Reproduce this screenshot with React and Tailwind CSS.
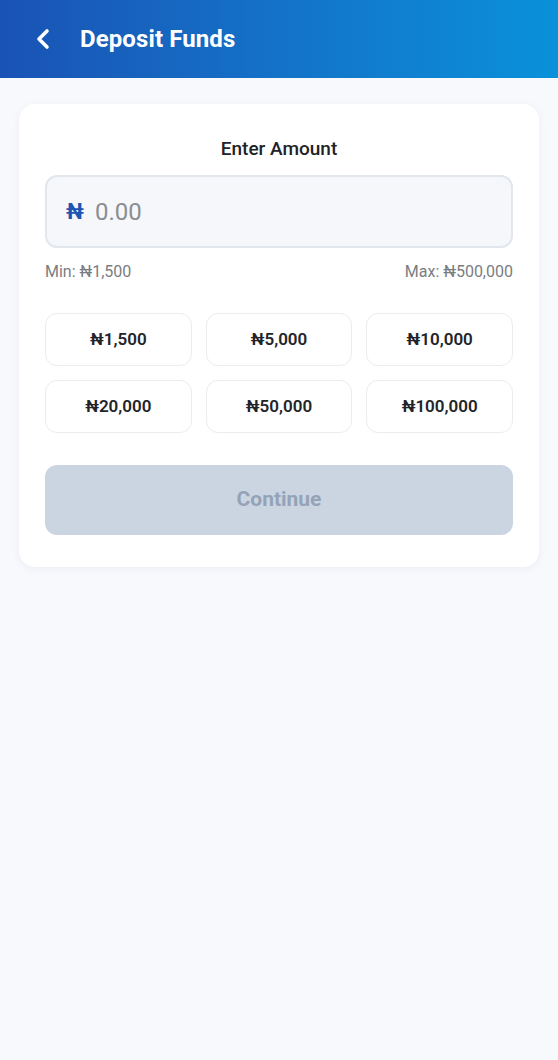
import React, { useState } from 'react';

const presets = ['₦1,500', '₦5,000', '₦10,000', '₦20,000', '₦50,000', '₦100,000'];

const BackIcon = () => (
  <svg width="18" height="22" viewBox="0 0 18 22" fill="none" stroke="white" strokeWidth="3.6" strokeLinecap="round" strokeLinejoin="round">
    <path d="M13 3 5 11l8 8" />
  </svg>
);

export default function App() {
  const [amount, setAmount] = useState('');

  return (
    <div className="min-h-[1060px] bg-[#f7f9fc] font-['Roboto',sans-serif]">
      {/* header */}
      <header className="h-[78px] bg-gradient-to-r from-[#1a53b5] to-[#0991d9] flex items-center pl-[33px]">
        <button className="w-[20px] h-[26px] flex items-center justify-center">
          <BackIcon />
        </button>
        <h1 className="ml-[27px] text-[24px] font-bold text-white tracking-[0.1px]">Deposit Funds</h1>
      </header>

      <main className="px-[19px] pt-[26px]">
        <div className="bg-white rounded-[16px] shadow-[0_2px_10px_rgba(15,40,90,0.05)] px-[26px] pt-[32px] pb-[32px]">
          <p className="text-center text-[19px] leading-[26px] font-medium text-[#1f2226]">Enter Amount</p>

          <div className="mt-[13px] h-[73px] rounded-[12px] border-2 border-[#e2e7ee] bg-[#f5f7fa] flex items-center px-[19px]">
            <span className="text-[22px] font-bold text-[#1d56b3]">₦</span>
            <input
              value={amount}
              onChange={(e) => setAmount(e.target.value)}
              placeholder="0.00"
              className="ml-[11px] flex-1 bg-transparent outline-none text-[24px] text-[#333] placeholder:text-[#8a8d92]"
            />
          </div>

          <div className="mt-[14px] flex justify-between text-[16px] leading-[20px] text-[#7a7d82]">
            <span>Min: ₦1,500</span>
            <span>Max: ₦500,000</span>
          </div>

          <div className="mt-[31px] grid grid-cols-3 gap-[14px]">
            {presets.map((p) => (
              <button
                key={p}
                onClick={() => setAmount(p.replace(/[₦,]/g, ''))}
                className="h-[53px] rounded-[12px] border border-[#ececee] bg-white text-[17px] font-semibold text-[#222429]"
              >
                {p}
              </button>
            ))}
          </div>

          <button
            disabled
            className="mt-[32px] w-full h-[70px] rounded-[12px] bg-[#cbd5e1] text-[21px] font-bold text-[#94a3b8]"
          >
            Continue
          </button>
        </div>
      </main>
    </div>
  );
}
